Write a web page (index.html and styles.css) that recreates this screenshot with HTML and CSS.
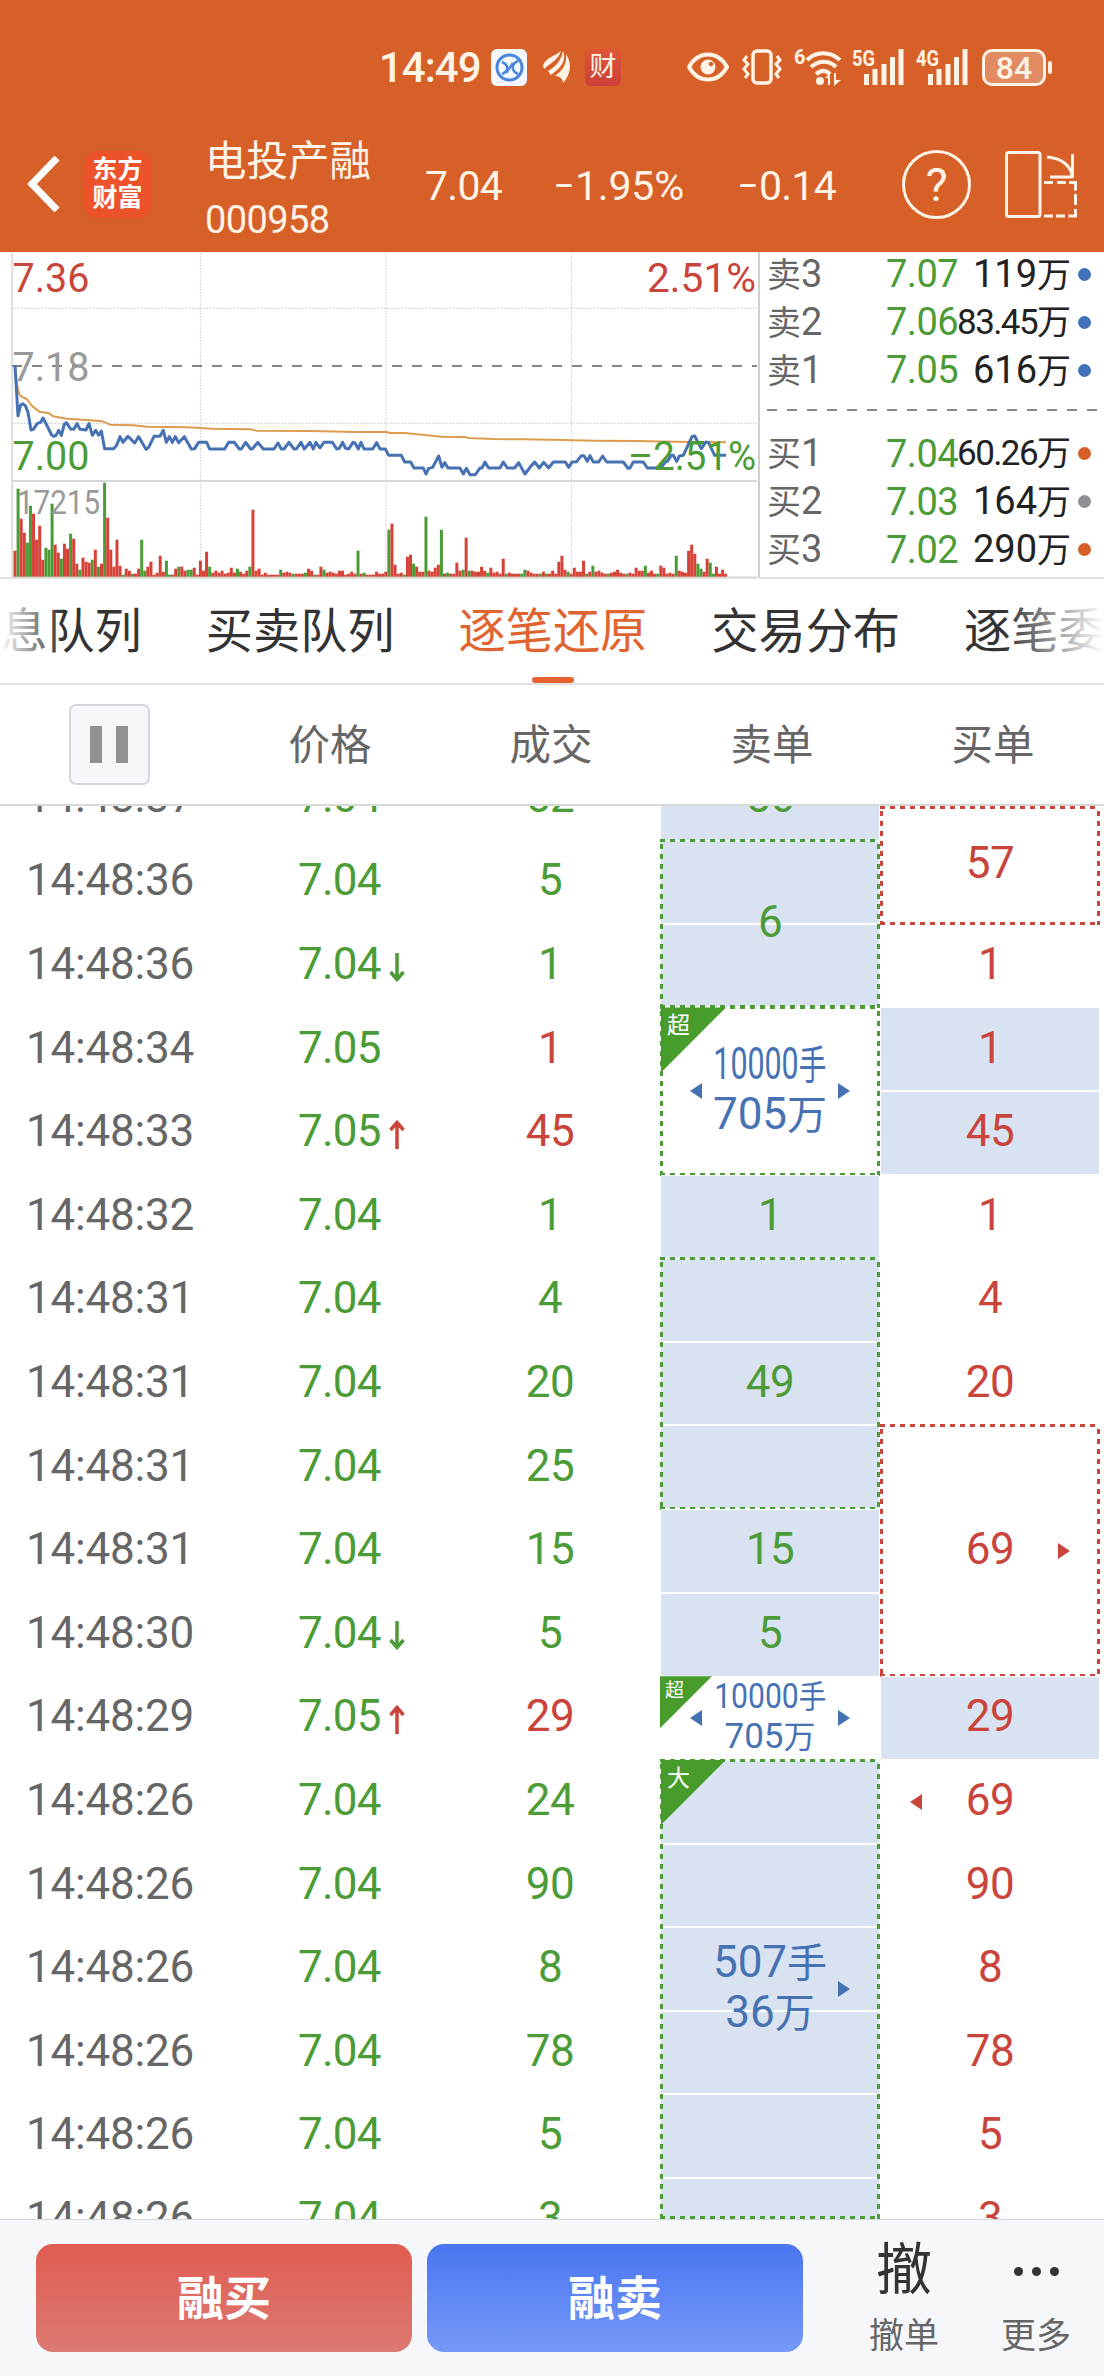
FILE: index.html
```html
<!DOCTYPE html>
<html lang="zh-CN">
<head>
  <meta charset="UTF-8" />
  <meta name="viewport" content="width=device-width, initial-scale=1.0" />
  <title>电投产融 000958</title>
  <link rel="stylesheet" href="styles.css">
</head>
<body>

  <header class="top">
    <div class="status">
      <span class="clock">14:49</span>
      <svg class="st-app" width="36" height="37" viewBox="0 0 36 37">
        <rect width="36" height="37" rx="6" fill="#f4f8fd"/>
        <circle cx="18.500" cy="18.500" r="12.500" fill="none" stroke="#4a86dc" stroke-width="3"/>
        <path d="M11 13c7 3 7 9 0 12M27 12c-7 3-7 10 0 13M15 24l7-10" fill="none" stroke="#4a86dc" stroke-width="2.500"/>
      </svg>
      <svg class="st-leaf" width="28" height="32" viewBox="0 0 28 32" fill="#fff3e6">
        <path d="M0 14C4 6 12 5 18 0 15 9 9 11 1 18z"/>
        <path d="M5 20C14 15 18 9 20 0c4 9-2 17-12 24z"/>
        <path d="M12 25c8-6 12-12 11-22 7 11 4 21-3 29 0-4-3-7-8-7z"/>
      </svg>
      <span class="st-cai">财</span>
      <svg class="st-eye" width="42" height="30" viewBox="0 0 42 30">
        <path d="M2 15C7 6 13 2.500 21 2.500S35 6 40 15C35 24 29 27.500 21 27.500S7 24 2 15z" fill="none" stroke="#fff3e6" stroke-width="4" stroke-linejoin="round"/>
        <circle cx="21" cy="15" r="7.500" fill="#fff3e6"/>
        <circle cx="24" cy="12" r="2.200" fill="#d75f28"/>
      </svg>
      <svg class="st-vib" width="40" height="36" viewBox="0 0 40 36" fill="none" stroke="#fff3e6" stroke-width="3">
        <rect x="11" y="2" width="18" height="32" rx="4" stroke-width="3.500"/>
        <path d="M5 7l-3 4 4 4-4 5 4 5-3 4M35 7l3 4-4 4 4 5-4 5 3 4"/>
      </svg>
      <svg class="st-wifi" width="48" height="37" viewBox="0 0 48 37">
        <text x="0" y="15" font-size="20" font-weight="700" fill="#fff3e6">6</text>
        <path d="M13 11C22 2 36 2 46 11M17 18c8-7 18-7 25 0M22 25c5-4 10-4 14 0" fill="none" stroke="#fff3e6" stroke-width="4.200"/>
        <circle cx="26" cy="32" r="4" fill="#fff3e6"/>
        <path d="M31 29l5-5v12h-2v-7zM40 24h2v7h5l-7 6z" fill="#fff3e6"/>
      </svg>
      <svg class="st-sig" width="52" height="36" viewBox="0 0 52 36" fill="#fff3e6">
        <text x="0" y="17" font-size="22" font-weight="700" textLength="23" lengthAdjust="spacingAndGlyphs">5G</text>
        <path d="M12 25h5v11h-5zM20.500 20h5v16h-5zM29.500 15h5v21h-5zM38 8h5v28h-5zM46.500 0h5v36h-5z"/>
      </svg>
      <svg class="st-sig" width="52" height="36" viewBox="0 0 52 36" fill="#fff3e6">
        <text x="0" y="17" font-size="22" font-weight="700" textLength="23" lengthAdjust="spacingAndGlyphs">4G</text>
        <path d="M12 25h5v11h-5zM20.500 20h5v16h-5zM29.500 15h5v21h-5zM38 8h5v28h-5zM46.500 0h5v36h-5z"/>
      </svg>
      <span class="battery">84</span>
      <span class="nub"></span>
    </div>

    <div class="titlebar">
      <svg class="back" width="34" height="56" viewBox="0 0 34 56">
        <path d="M31 2L6 28l25 26" fill="none" stroke="#fff" stroke-width="7"/>
      </svg>
      <div class="logo">东方<br>财富</div>
      <div class="stock">
        <div class="name">电投产融</div>
        <div class="code">000958</div>
      </div>
      <div class="quote q1">7.04</div>
      <div class="quote q2"><span class="minus">–</span>1.95%</div>
      <div class="quote q3"><span class="minus">–</span>0.14</div>
      <div class="help">?</div>
      <svg class="rotate" width="73" height="67" viewBox="0 0 73 67" fill="none" stroke="#fff3e6" stroke-width="3">
        <rect x="1.500" y="1.500" width="33.500" height="64" rx="2"/>
        <path d="M42 6C56 7 67 15 67 26M45 26h23.500M67.500 3v23"/>
        <path d="M39 31.500h9M52 31.500h9M64 31.500h6.500v8M70.500 43v11M70.500 58v7h-7M60 65h-9M48 65h-9"/>
      </svg>
    </div>
  </header>

  <section class="market">
    <svg class="chart" width="758" height="326" viewBox="0 0 758 326">
      <g fill="none" stroke="#d2d2d2" stroke-width="1.200" stroke-dasharray="1.500 1.500">
        <path d="M12 56.400H757M12 171.400H757M200.500 1V325M386 1V325M571.500 1V325"/>
      </g>
      <path d="M12.200 1V326" stroke="#dedede" stroke-width="2"/>
      <path d="M12 229H757M12 325.500H757" stroke="#d8d8d8" stroke-width="2"/>
      <path d="M12 114H757" stroke="#848484" stroke-width="2" stroke-dasharray="10 10"/>
      <g id="volume"></g>
      <text class="grey" x="12.500" y="129" textLength="77" lengthAdjust="spacingAndGlyphs">7.18</text>
      <text class="grey vol" x="17" y="262" textLength="83" lengthAdjust="spacingAndGlyphs">17215</text>
      <g transform="translate(0 -2) scale(.33333)" fill="none" stroke-linejoin="round">
        <polyline stroke="#dd9b50" stroke-width="6" points="45,345 50,400 57,430 64,440 80,447 96,468 118,485 148,490 160,499 200,506 270,511 308,514 330,524 400,526 440,530 560,532 640,536 750,538 770,542 930,543 1070,546 1160,546 1170,549 1215,549 1280,556 1325,560 1395,561 1405,564 1480,567 1570,568 1690,570 1780,572 1910,573 2020,575 2178,577"/>
        <polyline stroke="#4672b4" stroke-width="9" points="45,345 54,498 62,465 68,461 76,467 84,487 93,540 100,538 112,520 122,517 129,504 140,525 155,555 162,559 168,556 176,541 184,556 193,522 199,518 213,538 222,537 231,521 240,538 258,540 267,521 277,556 287,541 296,556 304,543 314,596 341,596 350,586 360,560 369,577 384,559 404,579 416,560 438,598 446,592 462,559 480,559 490,541 499,577 508,560 517,577 526,560 536,578 553,560 574,597 584,596 596,577 620,577 629,597 674,597 686,577 703,577 718,597 724,597 737,577 752,597 758,596 773,577 790,597 822,597 834,579 844,597 852,597 867,577 882,597 889,597 903,577 913,597 930,577 940,597 948,577 960,594 972,577 997,577 1010,597 1018,595 1028,577 1036,594 1046,597 1059,577 1065,579 1075,597 1083,577 1092,597 1118,597 1130,578 1140,597 1156,597 1166,616 1204,616 1214,636 1232,636 1242,654 1270,654 1278,672 1286,655 1298,652 1316,618 1326,652 1334,638 1344,654 1380,654 1390,672 1399,655 1410,674 1426,674 1440,654 1446,654 1455,636 1466,654 1500,654 1510,636 1522,654 1544,654 1556,638 1575,672 1590,652 1604,636 1618,654 1631,637 1646,654 1660,636 1696,636 1706,652 1716,636 1730,635 1744,617 1752,617 1762,634 1770,617 1780,636 1796,636 1808,618 1820,636 1870,636 1884,655 1890,654 1900,636 1930,636 1942,654 1982,654 1996,636 2002,634 2014,616 2020,616 2030,634 2038,618 2050,616 2076,560 2084,558 2104,596 2118,576 2126,578 2144,616 2178,616"/>
      </g>
      <text class="red" x="12.500" y="40" textLength="77" lengthAdjust="spacingAndGlyphs">7.36</text>
      <text class="red" x="647" y="40" textLength="109" lengthAdjust="spacingAndGlyphs">2.51%</text>
      <text class="green" x="12.500" y="218" textLength="77" lengthAdjust="spacingAndGlyphs">7.00</text>
      <text class="green" x="628" y="218" textLength="128" lengthAdjust="spacingAndGlyphs">–2.51%</text>
    </svg>

    <div class="book">
      <div class="level"><span class="side"><span class="cn">卖</span>3</span><span class="px">7.07</span><span class="amt">119<span class="cn">万</span></span><span class="dot blue"></span></div>
      <div class="level"><span class="side"><span class="cn">卖</span>2</span><span class="px">7.06</span><span class="amt tight">83.45<span class="cn">万</span></span><span class="dot blue"></span></div>
      <div class="level"><span class="side"><span class="cn">卖</span>1</span><span class="px">7.05</span><span class="amt">616<span class="cn">万</span></span><span class="dot blue"></span></div>
      <div class="split"></div>
      <div class="level"><span class="side"><span class="cn">买</span>1</span><span class="px">7.04</span><span class="amt tight">60.26<span class="cn">万</span></span><span class="dot orange"></span></div>
      <div class="level"><span class="side"><span class="cn">买</span>2</span><span class="px">7.03</span><span class="amt">164<span class="cn">万</span></span><span class="dot"></span></div>
      <div class="level"><span class="side"><span class="cn">买</span>3</span><span class="px">7.02</span><span class="amt">290<span class="cn">万</span></span><span class="dot orange"></span></div>
    </div>
  </section>

  <nav class="tabs">
    <a>消息队列</a>
    <a>买卖队列</a>
    <a class="active">逐笔还原</a>
    <a>交易分布</a>
    <a>逐笔委托</a>
  </nav>

  <div class="thead">
    <div><button class="pause"><i></i><i></i></button></div>
    <div class="th">价格</div>
    <div class="th">成交</div>
    <div class="th">卖单</div>
    <div class="th">买单</div>
  </div>

  <main class="ticks">
    <div class="col time">
      <div class="cell first">14:48:37</div>
      <div class="cell">14:48:36</div>
      <div class="cell">14:48:36</div>
      <div class="cell">14:48:34</div>
      <div class="cell">14:48:33</div>
      <div class="cell">14:48:32</div>
      <div class="cell">14:48:31</div>
      <div class="cell">14:48:31</div>
      <div class="cell">14:48:31</div>
      <div class="cell">14:48:31</div>
      <div class="cell">14:48:30</div>
      <div class="cell">14:48:29</div>
      <div class="cell">14:48:26</div>
      <div class="cell">14:48:26</div>
      <div class="cell">14:48:26</div>
      <div class="cell">14:48:26</div>
      <div class="cell">14:48:26</div>
      <div class="cell last">14:48:26</div>
    </div>

    <div class="col price green">
      <div class="cell first">7.04</div>
      <div class="cell">7.04</div>
      <div class="cell">7.04<svg width="16" height="29" viewBox="0 0 16 29"><path d="M8 0v26M1.500 19L8 26.500l6.500-7.500"/></svg></div>
      <div class="cell">7.05</div>
      <div class="cell">7.05<svg class="red" width="16" height="29" viewBox="0 0 16 29"><path d="M8 29V3M1.500 10L8 2.500l6.500 7.500"/></svg></div>
      <div class="cell">7.04</div>
      <div class="cell">7.04</div>
      <div class="cell">7.04</div>
      <div class="cell">7.04</div>
      <div class="cell">7.04</div>
      <div class="cell">7.04<svg width="16" height="29" viewBox="0 0 16 29"><path d="M8 0v26M1.500 19L8 26.500l6.500-7.500"/></svg></div>
      <div class="cell">7.05<svg class="red" width="16" height="29" viewBox="0 0 16 29"><path d="M8 29V3M1.500 10L8 2.500l6.500 7.500"/></svg></div>
      <div class="cell">7.04</div>
      <div class="cell">7.04</div>
      <div class="cell">7.04</div>
      <div class="cell">7.04</div>
      <div class="cell">7.04</div>
      <div class="cell last">7.04</div>
    </div>

    <div class="col green">
      <div class="cell first">52</div>
      <div class="cell">5</div>
      <div class="cell">1</div>
      <div class="cell red">1</div>
      <div class="cell red">45</div>
      <div class="cell">1</div>
      <div class="cell">4</div>
      <div class="cell">20</div>
      <div class="cell">25</div>
      <div class="cell">15</div>
      <div class="cell">5</div>
      <div class="cell red">29</div>
      <div class="cell">24</div>
      <div class="cell">90</div>
      <div class="cell">8</div>
      <div class="cell">78</div>
      <div class="cell">5</div>
      <div class="cell last">3</div>
    </div>

    <div class="col green">
      <div class="cell first fill"><b class="arrow left"></b>56</div>
      <div class="cell span2 fill dash">6</div>
      <div class="cell span2 dash big">
        <span class="tag"><em>超</em></span>
        <b class="arrow left"></b>
        <span class="line sq">10000<span class="cn">手</span></span>
        <span class="line">705<span class="cn">万</span></span>
        <b class="arrow right"></b>
      </div>
      <div class="cell fill">1</div>
      <div class="cell span3 fill dash">49</div>
      <div class="cell fill">15</div>
      <div class="cell fill">5</div>
      <div class="cell big small">
        <span class="tag"><em>超</em></span>
        <b class="arrow left"></b>
        <span class="line sq">10000<span class="cn">手</span></span>
        <span class="line">705<span class="cn">万</span></span>
        <b class="arrow right"></b>
      </div>
      <div class="cell span6 fill dash big to-end">
        <span class="tag"><em>大</em></span>
        <span class="line">507<span class="cn">手</span></span>
        <span class="line">36<span class="cn">万</span></span>
        <b class="arrow right"></b>
      </div>
    </div>

    <div class="col red">
      <div class="cell span2 dash from-top">57</div>
      <div class="cell">1</div>
      <div class="cell fill">1</div>
      <div class="cell fill">45</div>
      <div class="cell">1</div>
      <div class="cell">4</div>
      <div class="cell">20</div>
      <div class="cell span3 dash">69<b class="arrow right"></b></div>
      <div class="cell fill">29</div>
      <div class="cell"><b class="arrow left"></b>69</div>
      <div class="cell">90</div>
      <div class="cell">8</div>
      <div class="cell">78</div>
      <div class="cell">5</div>
      <div class="cell last">3</div>
    </div>
  </main>

  <footer class="actions">
    <button class="buy">融买</button>
    <button class="sell">融卖</button>
    <div class="act"><span class="ico">撤</span><span>撤单</span></div>
    <div class="act"><span class="ico dots"><i></i><i></i><i></i></span><span>更多</span></div>
  </footer>

  <script src="script.js"></script>
</body>
</html>
```

FILE: styles.css
```css
* {
  box-sizing: border-box;
}
body {
  margin: 0;
  width: 1104px;
  height: 2376px;
  overflow: hidden;
  background: #fff;
  color: #333;
  font-family: Roboto, "Noto Sans CJK SC", sans-serif;
}
i, em {
  font-style: normal;
}
button {
  border: none;
  padding: 0;
  font-family: inherit;
}
.red { color: #c9443b; }
.green { color: #4b9c37; }

/* header */
.top {
  height: 252px;
  background: #d75f28;
  color: #fff3e6;
}
.status {
  height: 116px;
  padding: 18px 0 0 379px;
  display: flex;
  align-items: center;
}
.status svg, .status span {
  flex: none;
}
.status svg {
  overflow: visible;
}
.clock {
  width: 112px;
  font-size: 42px;
  font-weight: 500;
  letter-spacing: -1px;
}
.st-leaf { margin-left: 16px; }
.st-cai {
  width: 36px;
  height: 37px;
  margin-left: 14px;
  border-radius: 6px;
  background: linear-gradient(#dd5638, #cc3f38);
  font-size: 27px;
  line-height: 36px;
  text-align: center;
}
.st-eye { margin-left: 66px; }
.st-vib { margin-left: 13px; }
.st-wifi { margin-left: 12px; }
.st-sig { margin-left: 10px; }
.st-sig + .st-sig { margin-left: 12px; }
.battery {
  width: 64px;
  height: 37px;
  margin-left: 14px;
  border: 3px solid #fff3e6;
  border-radius: 10px;
  background: #e28b63;
  font-size: 32px;
  font-weight: 500;
  line-height: 32px;
  text-align: center;
}
.nub {
  width: 4px;
  height: 13px;
  margin-left: 2px;
  border-radius: 2px;
  background: #fff3e6;
}
.titlebar {
  height: 136px;
  padding-left: 26px;
  display: flex;
  align-items: center;
}
.titlebar > * {
  flex: none;
}
.logo {
  width: 67px;
  height: 67px;
  margin-left: 24px;
  padding-top: 5px;
  border-radius: 14px;
  background: #ec532a;
  color: #fff;
  font-size: 25px;
  font-weight: 700;
  line-height: 28px;
  text-align: center;
}
.stock {
  width: 220px;
  margin-left: 54px;
  padding-top: 13px;
}
.name {
  font-size: 41.500px;
  line-height: 58px;
}
.code {
  font-size: 38px;
  line-height: 58px;
  letter-spacing: -0.6px;
}
.quote {
  font-size: 41px;
  padding-top: 3px;
  letter-spacing: -0.7px;
}
.q1 { width: 130px; }
.q2 { width: 184px; letter-spacing: -0.2px; }
.q3 { width: 163px; }
.minus {
  display: inline-block;
  width: 20px;
  transform: translateX(-1px) scaleX(0.75);
  transform-origin: 0 50%;
}
.help {
  width: 69px;
  height: 69px;
  border: 3px solid #fff3e6;
  border-radius: 50%;
  font-size: 47px;
  line-height: 64px;
  text-align: center;
}
.rotate { margin-left: 34px; }

/* chart and order book */
.market {
  height: 327px;
  display: flex;
  border-bottom: 2px solid #e3e3e3;
}
.chart {
  flex: none;
}
.chart text {
  font-size: 41px;
  fill: currentColor;
}
.chart .grey { color: #999; }
.chart .vol { font-size: 33px; }
.book {
  width: 346px;
  margin-top: -2px;
  padding-left: 9px;
  background: linear-gradient(#cfcfcf, #cfcfcf) 0 2px / 2px 100% no-repeat;
}
.level {
  height: 48px;
  display: flex;
  align-items: center;
  font-size: 38px;
  line-height: 48px;
}
.cn {
  font-size: 34px;
}
.side {
  width: 119px;
  color: #666;
  white-space: nowrap;
}
.px {
  width: 70px;
  color: #4b9c37;
  letter-spacing: -0.5px;
}
.amt {
  width: 115px;
  text-align: right;
  color: #222;
  white-space: nowrap;
}
.tight {
  font-size: 35px;
  letter-spacing: -1.6px;
}
.tight .cn { letter-spacing: 0; }
.dot {
  width: 13px;
  height: 13px;
  margin-left: 7px;
  border-radius: 50%;
  background: #909095;
}
.dot.blue { background: #4272b8; }
.dot.orange { background: #d75f28; }
.split {
  height: 35.5px;
  background: repeating-linear-gradient(90deg, #888 0 10px, transparent 10px 20px) 0 15px / 330px 2px no-repeat;
}

/* tabs */
.tabs {
  position: relative;
  height: 106px;
  overflow: hidden;
  border-bottom: 2px solid #e3e3e3;
  display: flex;
  gap: 64px;
}
.tabs a {
  position: relative;
  flex: none;
  font-size: 47.200px;
  line-height: 107px;
}
.tabs a:first-child {
  margin-left: -47px;
}
.tabs .active {
  color: #e0642f;
}
.tabs .active::after {
  content: "";
  position: absolute;
  left: 73px;
  bottom: 0;
  width: 42px;
  height: 6px;
  border-radius: 3px;
  background: #e8622d;
}
/* edge fades */
.tabs::before, .tabs::after {
  content: "";
  position: absolute;
  z-index: 1;
  top: 0;
  width: 100px;
  height: 100px;
}
.tabs::before {
  left: 0;
  width: 62px;
  background: linear-gradient(90deg, #fff, rgba(255, 255, 255, 0));
}
.tabs::after {
  right: 0;
  background: linear-gradient(270deg, #fff, rgba(255, 255, 255, 0));
}

/* table */
.thead {
  height: 121px;
  border-bottom: 2px solid #d6dad6;
  display: flex;
  align-items: center;
  color: #666;
  font-size: 41.500px;
}
.thead > div {
  flex: 1;
  display: flex;
  justify-content: center;
}
.thead .th {
  padding: 0 1px 5px 0;
}
.pause {
  width: 81px;
  height: 81px;
  margin-right: 2px;
  border: 2px solid #d5d6db;
  border-radius: 7px;
  background: #f6f7fa;
  display: flex;
  align-items: center;
  justify-content: center;
  gap: 14px;
}
.pause i {
  width: 12px;
  height: 37px;
  background: #909095;
}
.ticks {
  height: 1413px;
  overflow: hidden;
  display: flex;
}
.col {
  width: 220px;
  display: grid;
  grid-template-rows: 34.2px repeat(16, 83.6px) 41.2px;
}
.cell {
  position: relative;
  padding-bottom: 2px;
  display: flex;
  align-items: center;
  justify-content: center;
  font-size: 44px;
  line-height: 49px;
  letter-spacing: -0.6px;
}
.first {
  align-self: end;
  height: 83.6px;
}
.last {
  align-self: start;
  height: 83.6px;
}
.span2 { grid-row: span 2; }
.span3 { grid-row: span 3; }
.span6 { grid-row: span 6; }
.time {
  color: #666;
}
.time .cell {
  letter-spacing: -0.2px;
}
.price .cell {
  justify-content: flex-start;
  padding-left: 78px;
  letter-spacing: -0.8px;
}
.price svg {
  margin: 5px 0 0 8px;
  fill: none;
  stroke: currentColor;
  stroke-width: 3.500;
}
.fill {
  margin: 0 1px;
  background: repeating-linear-gradient(#fff 0 1px, #d9e2f0 1px 82.6px, #fff 82.6px 83.6px);
}
.dash::before {
  content: "";
  position: absolute;
  inset: -1px 0;
  background:
    repeating-linear-gradient(90deg, currentColor 0 5px, transparent 5px 10px) 0 0 / 100% 3px no-repeat,
    repeating-linear-gradient(90deg, currentColor 0 5px, transparent 5px 10px) 0 100% / 100% 3px no-repeat,
    repeating-linear-gradient(transparent 0 5px, currentColor 5px 10px) 0 0 / 3px 100% no-repeat,
    repeating-linear-gradient(transparent 0 5px, currentColor 5px 10px) 100% 0 / 3px 100% no-repeat;
}
.fill.dash::before { inset: -1px; }
.dash.from-top::before { top: 0; }
.fill.to-end::before { bottom: 0; }
.arrow {
  position: absolute;
  top: calc(50% - 8px);
  border: 8.500px solid transparent;
}
.arrow.left {
  left: 30px;
  border-left: 0;
  border-right: 12px solid currentColor;
}
.arrow.right {
  left: 178px;
  border-right: 0;
  border-left: 12px solid currentColor;
}
.fill .arrow { margin-left: -1px; }
.big {
  flex-direction: column;
  letter-spacing: 0;
}
.line, .big .arrow {
  color: #4672b4;
}
.line .cn { font-size: 40px; }
.sq { transform: scaleX(0.69); }
.tag {
  position: absolute;
  left: 1px;
  top: 0;
  width: 65px;
  height: 65px;
  background: #489c2c;
  clip-path: polygon(0 0, 100% 0, 0 100%);
}
.fill .tag { left: 0; }
.tag em {
  display: block;
  padding: 7px 0 0 6px;
  color: #fff;
  font-size: 23px;
  line-height: 24px;
}
.small {
  font-size: 35px;
  line-height: 39px;
}
.small .cn { font-size: 32px; }
.small .sq { transform: scaleX(0.86); }
.small .tag {
  left: 0;
  width: 52px;
  height: 52px;
}
.small .tag em {
  padding: 3px 0 0 5px;
  font-size: 19px;
}

/* footer */
.actions {
  height: 157px;
  padding: 24px 0 0 36px;
  border-top: 1px solid #d6d8dc;
  background: #f6f7fa;
  display: flex;
}
.actions button {
  flex: none;
  width: 376px;
  height: 108px;
  margin-right: 15px;
  padding-bottom: 7px;
  border-radius: 17px;
  color: #fff;
  font-size: 47px;
  font-weight: 700;
}
.buy { background: linear-gradient(#e05c50, #dc7a73); }
.sell { background: linear-gradient(#4975f0, #7699f8); }
.act {
  flex: none;
  width: 132px;
  display: flex;
  flex-direction: column;
  align-items: center;
  color: #666;
  font-size: 35px;
  line-height: 78px;
}
.act:nth-child(3) { margin-left: 20px; }
.act .ico {
  height: 54px;
  color: #333;
  font-size: 56px;
  line-height: 53px;
}
.dots {
  display: flex;
  align-items: center;
  gap: 9px;
}
.dots i {
  width: 9px;
  height: 9px;
  border-radius: 50%;
  background: #333;
}
```

FILE: script.js
```js
// minute volume: colour + bar height
const volume = "r26 g88 r58 r44 g34 g71 r63 r37 r51 r17 g29 g27 g73 r32 r24 g18 r33 r28 g43 r38 r13 g7 r19 r15 r14 g17 r27 g10 r13 g94 r59 r27 r10 r37 r11 g2 r8 r6 g3 r3 r8 g37 g6 r10 r15 r2 r4 r21 r5 g16 g2 r2 r8 g10 r10 r6 g7 g7 r9 r2 r16 r6 r25 g10 r4 r6 r4 r6 r3 r4 r9 r4 g8 r5 r3 r6 g10 r67 r6 r8 r2 r4 r2 r2 r2 r2 g7 r4 r5 r4 g3 r3 r3 r3 g4 r8 r6 g2 r2 r10 g7 r4 r5 r4 r3 r6 r6 r2 r3 r5 r3 g26 r3 g4 r2 r2 r2 r5 r3 r3 r5 g47 r53 r12 r3 r4 g2 r20 r22 g13 r10 r5 r5 g60 r6 r5 r9 r12 g47 r3 g4 r3 r3 r14 r6 g7 r39 g6 r6 r5 r5 r10 r6 g4 r9 r4 r5 r3 r18 g3 r4 r3 r3 r3 g3 g7 r6 r4 r3 r3 g3 r5 g3 r3 r6 r3 r15 r21 r7 g5 r3 r9 r5 r5 r16 g3 r5 g11 r5 r6 r4 r3 g3 r4 r5 r7 r4 r3 g3 r4 r3 r9 r6 r6 g11 r4 r6 r3 g3 r11 r9 r3 r4 r3 g21 r6 r5 r4 r26 r32 r23 g13 g8 r5 r18 g14 g3 r10 r3 r7 r3";

const layer = document.getElementById("volume");
volume.split(" ").forEach((item, i) => {
  const h = Number(item.slice(1));
  const bar = document.createElementNS("http://www.w3.org/2000/svg", "rect");
  bar.setAttribute("x", 13.5 + i * 3.09);
  bar.setAttribute("y", 324.7 - h);
  bar.setAttribute("width", 3);
  bar.setAttribute("height", h);
  bar.setAttribute("fill", item[0] === "r" ? "#d64238" : "#4b9c37");
  layer.appendChild(bar);
});
```
